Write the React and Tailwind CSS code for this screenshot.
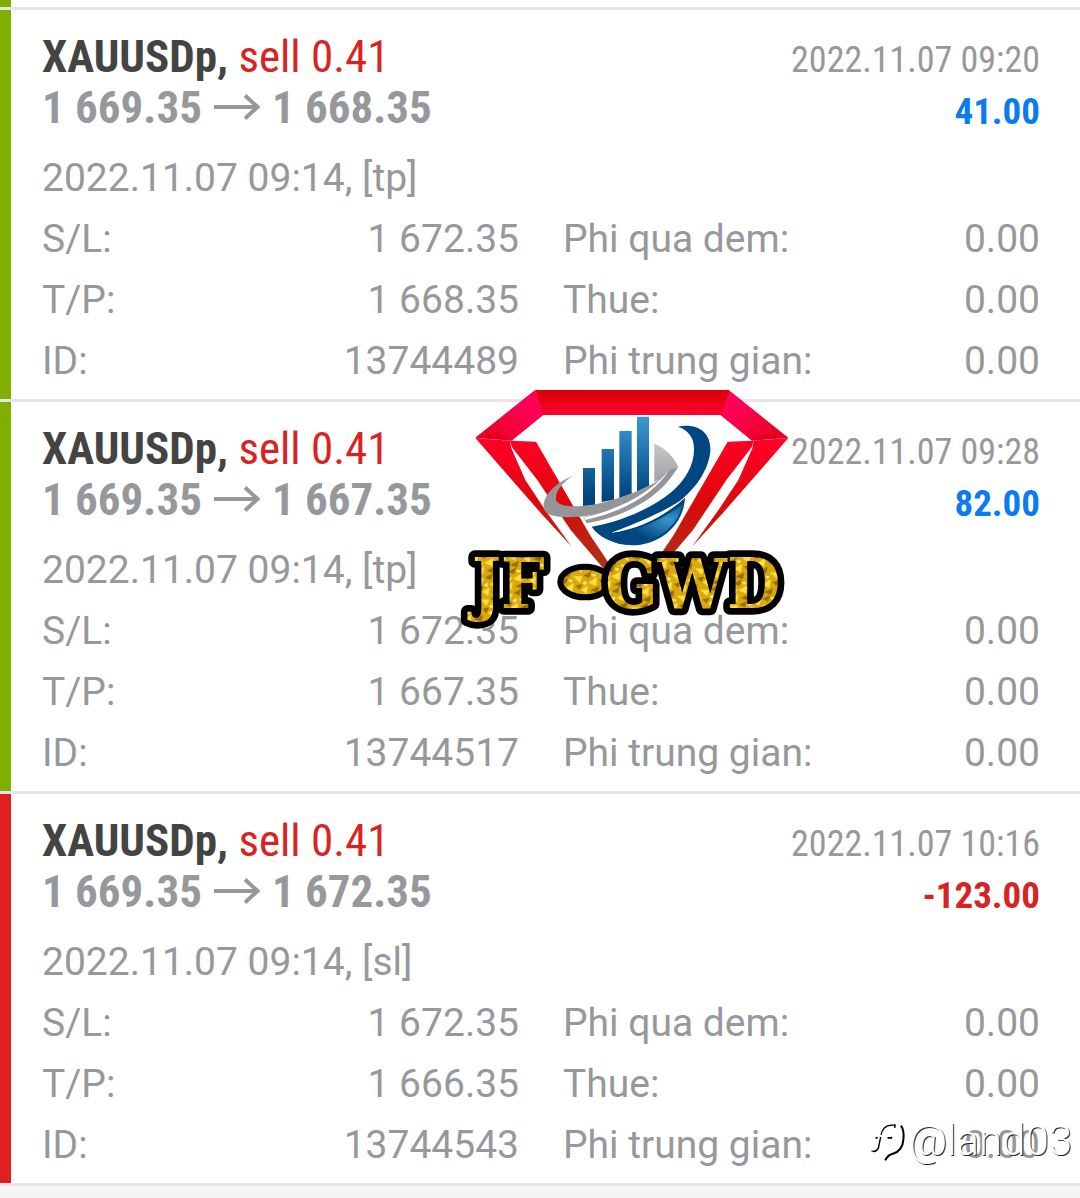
import React from 'react';

const deals = [
  {
    id: '13744489',
    symbol: 'XAUUSDp',
    side: 'sell 0.41',
    open: '1 669.35',
    close: '1 668.35',
    closedAt: '2022.11.07 09:20',
    opened: '2022.11.07 09:14, [tp]',
    profit: '41.00',
    sl: '1 672.35',
    tp: '1 668.35',
  },
  {
    id: '13744517',
    symbol: 'XAUUSDp',
    side: 'sell 0.41',
    open: '1 669.35',
    close: '1 667.35',
    closedAt: '2022.11.07 09:28',
    opened: '2022.11.07 09:14, [tp]',
    profit: '82.00',
    sl: '1 672.35',
    tp: '1 667.35',
  },
  {
    id: '13744543',
    symbol: 'XAUUSDp',
    side: 'sell 0.41',
    open: '1 669.35',
    close: '1 672.35',
    closedAt: '2022.11.07 10:16',
    opened: '2022.11.07 09:14, [sl]',
    profit: '-123.00',
    sl: '1 672.35',
    tp: '1 666.35',
  },
];

function Arrow() {
  return (
    <svg viewBox="0 0 46 28" className="w-[46px] h-7 shrink-0" fill="none" stroke="currentColor" strokeWidth="4" aria-hidden="true">
      <path d="M0 13H43M31 1.5L43.500 13L31 24.500" />
    </svg>
  );
}

function Row({ label, value }) {
  return (
    <div className="flex justify-between">
      <dt>{label}</dt>
      <dd>{value}</dd>
    </div>
  );
}

function Deal({ deal }) {
  const loss = deal.profit.startsWith('-');

  return (
    <li className="border-b-3 border-[#e6e6e6]">
      <div className={`border-l-11 bg-white pt-[21px] pb-[7px] pl-[31px] pr-10 ${loss ? 'border-[#e01f1f]' : 'border-[#7fb000]'}`}>
        <div className="flex justify-between font-['Roboto_Condensed','Roboto',sans-serif] leading-[51px]">
          <div className="text-[45px]">
            <h2>
              <span className="font-bold text-[#444444]">{deal.symbol},</span>{' '}
              <span className="text-[#d62424]">{deal.side}</span>
            </h2>
            <p className="flex items-center gap-3 font-bold">
              <span>{deal.open}</span>
              <Arrow />
              <span>{deal.close}</span>
            </p>
          </div>
          <div className="pt-1 text-right">
            <p className="text-[36px]">{deal.closedAt}</p>
            <p className={`text-[37px] font-bold ${loss ? 'text-[#d62424]' : 'text-[#0a7cf0]'}`}>{deal.profit}</p>
          </div>
        </div>
        <div className="mt-[11px] text-[39px] leading-[61px]">
          <p>{deal.opened}</p>
          <div className="grid grid-cols-2 gap-11">
            <dl>
              <Row label="S/L:" value={deal.sl} />
              <Row label="T/P:" value={deal.tp} />
              <Row label="ID:" value={deal.id} />
            </dl>
            <dl>
              <Row label="Phi qua dem:" value="0.00" />
              <Row label="Thue:" value="0.00" />
              <Row label="Phi trung gian:" value="0.00" />
            </dl>
          </div>
        </div>
      </div>
    </li>
  );
}

function DiamondSide({ id }) {
  return (
    <g id={id}>
      <path d="M255 30L280 105L185 182L76 173Z" fill="url(#pink)" />
      <path d="M76 173L130 160L185 182Z" fill="#d6001c" opacity=".6" />
      <path d="M76 174L180 182L184 205L226 300L284 388L365 500L275 402Z" fill="url(#red)" />
      <path d="M180 182L258 185L420 465L484 560L470 577L362 450L262 300L186 202Z" fill="url(#red)" />
    </g>
  );
}

function Logo() {
  return (
    <svg viewBox="0 0 1050 750" className="w-[350px] h-[250px]" role="img" aria-label="JF GWD">
      <defs>
        <linearGradient id="band" x2="0" y2="1">
          <stop offset="0" stopColor="#d90000" />
          <stop offset="1" stopColor="#ff0033" />
        </linearGradient>
        <linearGradient id="pink" x1="1" y1="0" x2="0" y2="1">
          <stop offset="0.3" stopColor="#ff0057" />
          <stop offset="1" stopColor="#e30014" />
        </linearGradient>
        <linearGradient id="red" gradientUnits="userSpaceOnUse" x1="0" y1="180" x2="0" y2="560">
          <stop offset="0" stopColor="#ff0026" />
          <stop offset="0.5" stopColor="#dc0a0a" />
          <stop offset="1" stopColor="#a83218" />
        </linearGradient>
        <linearGradient id="bar" gradientUnits="userSpaceOnUse" x1="0" y1="110" x2="0" y2="350">
          <stop offset="0" stopColor="#3a9bd3" />
          <stop offset="1" stopColor="#00437f" />
        </linearGradient>
        <linearGradient id="grey" x2="0" y2="1">
          <stop offset="0" stopColor="#c8c8ca" />
          <stop offset="1" stopColor="#a0a1a4" />
        </linearGradient>
        <radialGradient id="bowl" cx=".8" cy=".4" r=".6">
          <stop offset="0" stopColor="#3a95cf" />
          <stop offset="1" stopColor="#00467f" />
        </radialGradient>
        <pattern id="gold" width="48" height="44" patternUnits="userSpaceOnUse" patternTransform="rotate(-14) scale(1.5)">
          <rect width="48" height="44" fill="#d9a90f" />
          <path d="M0 0L18 5L10 16ZM26 20L46 14L40 30ZM8 30L24 26L18 42Z" fill="#ffe03c" />
          <path d="M20 4L38 0L30 12ZM0 20L14 20L6 30ZM26 36L46 32L40 44Z" fill="#9a6c05" />
          <path d="M36 4L46 8L40 12ZM14 18L24 16L20 24Z" fill="#fff09a" />
        </pattern>
      </defs>

      <DiamondSide id="side" />
      <use href="#side" transform="matrix(-1 0 0 1 1091 0)" />
      <path d="M255 30H838L815 105H278Z" fill="url(#band)" />

      <g fill="url(#bar)">
        <path d="M399 264H435V376L399 378Z" />
        <path d="M455 207H492V359L455 366Z" />
        <path d="M508 153H545V342L508 354Z" />
        <path d="M561 110H597V318L561 335Z" />
      </g>
      <path d="M613 190Q665 215 685 260Q655 292 613 306Z" fill="url(#grey)" />
      <path
        d="M368 288C320 306 276 346 281 385C290 424 400 412 455 399C560 372 640 318 685 262C640 300 560 340 480 362C400 384 328 386 318 360C314 334 340 305 368 288Z"
        fill="#939598"
      />
      <path d="M657 270C612 330 520 386 400 411L410 430C530 408 632 352 682 264Z" fill="#939598" />
      <path d="M657 270C612 330 520 386 402 412L406 420C526 394 616 338 657 270Z" fill="#fff" />
      <path
        d="M683 140C740 128 785 155 781 215C770 300 700 372 590 424C545 442 500 452 485 458C560 448 640 412 705 353C700 440 625 497 545 496C490 494 445 470 425 440C520 424 610 380 660 340C720 292 742 228 728 180C718 155 700 145 683 140Z"
        fill="#004680"
      />
      <path d="M500 460C570 450 640 416 697 374C684 440 620 489 545 489C520 484 505 474 500 460Z" fill="url(#bowl)" />
      <path d="M485 458C570 446 640 410 705 353C650 390 590 418 485 458Z" fill="#fff" />

      <ellipse cx="405" cy="606" rx="74" ry="46" fill="url(#gold)" stroke="#000" strokeWidth="18" />
      <g
        fill="url(#gold)"
        stroke="#000"
        strokeWidth="40"
        strokeLinejoin="round"
        paintOrder="stroke"
        fontFamily="'DejaVu Serif Condensed', 'DejaVu Serif', serif"
        fontWeight="700"
        fontSize="205"
      >
        <text x="66" y="684">JF</text>
        <text x="466" y="684">GWD</text>
      </g>
    </svg>
  );
}

function Watermark() {
  return (
    <div className="flex items-center gap-1 text-white">
      <svg viewBox="0 0 110 120" className="w-[37px] h-10" fill="none" aria-hidden="true">
        <path d="M9 88Q22 96 30 82L38 44Q42 14 70 12H80V20" stroke="#000" strokeWidth="5" />
        <path d="M22 50H38M58 50H72M98 14Q108 26 106 52Q104 90 74 98Q58 102 51 118" stroke="#000" strokeWidth="6" />
        <path d="M4 84Q18 90 26 76L34 40Q40 8 68 7H78M20 45H68" stroke="#fff" strokeWidth="6" />
      </svg>
      <span className="text-[42px] leading-[50px] font-light [text-shadow:1px_1px_0_#222]">@land03</span>
    </div>
  );
}

export default function App() {
  return (
    <main className="relative min-h-screen bg-[#f5f5f5] font-['Roboto',sans-serif] text-[#97989c]">
      <div className="border-b-3 border-[#e6e6e6]">
        <div className="h-[7px] border-l-11 border-[#7fb000] bg-white" />
      </div>
      <ul>
        {deals.map((deal) => (
          <Deal key={deal.id} deal={deal} />
        ))}
      </ul>
      <div className="absolute left-[450px] top-[380px]">
        <Logo />
      </div>
      <div className="absolute right-2 bottom-8">
        <Watermark />
      </div>
    </main>
  );
}
